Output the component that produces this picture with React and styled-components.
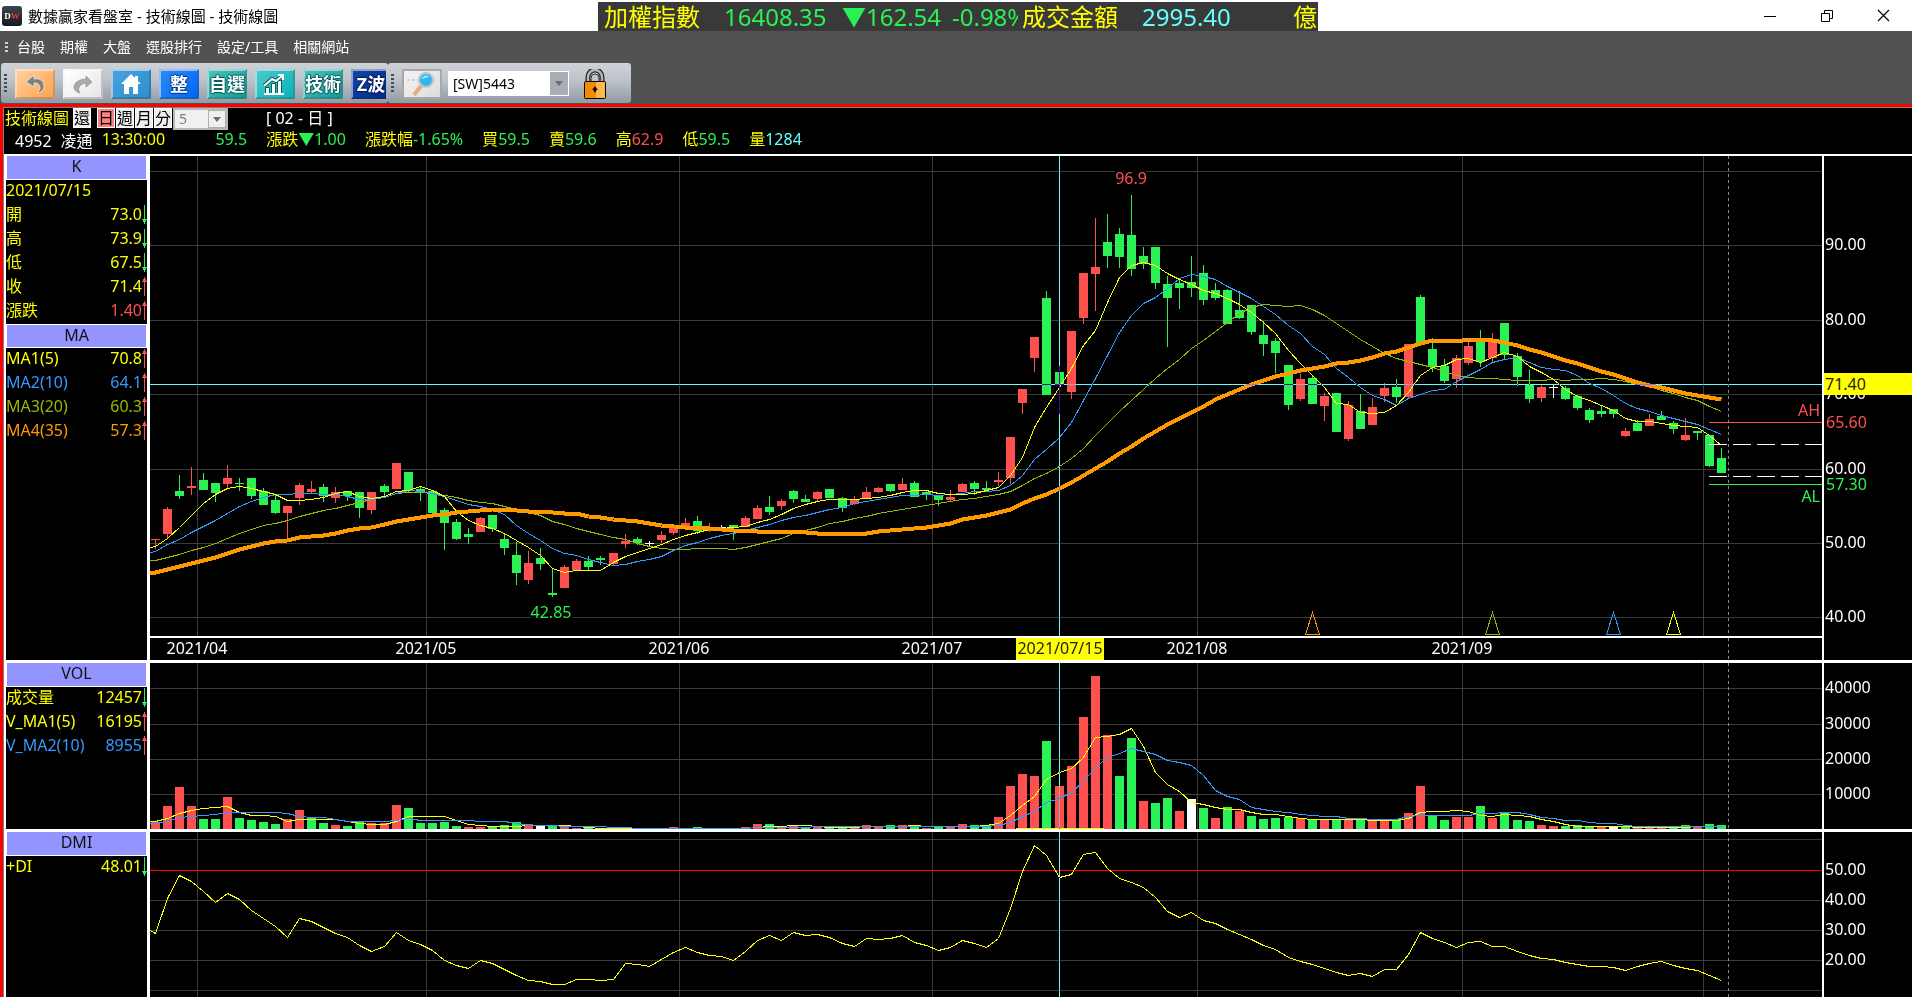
import React from "react";
import styled, { createGlobalStyle } from "styled-components";

const UP = "#ff5050";
const DOWN = "#2af254";
const YELLOW = "#ffff00";
const BLUE = "#3399ff";
const OLIVE = "#96b800";
const ORANGE = "#ff9900";
const CYAN = "#66ffff";
const GRID = "#3c3c3c";

const GlobalStyle = createGlobalStyle`
  * {
    box-sizing: border-box;
  }
  body {
    margin: 0;
    background: #000;
    font-family: "Noto Sans", "Noto Sans CJK TC", sans-serif;
    font-size: 16px;
  }
  button, select {
    font-family: inherit;
  }
`;

const Window = styled.div`
  display: flex;
  flex-direction: column;
  height: 100vh;
  min-height: 600px;
  overflow: hidden;
`;

const TitleBar = styled.header`
  display: grid;
  grid-template-columns: 598fr 720px 594fr;
  height: 31px;
  flex: none;
  background: #fff;
`;

const Title = styled.h1`
  display: flex;
  align-items: center;
  gap: 6px;
  margin: 0;
  padding-left: 2px;
  font-size: 15px;
  font-weight: 400;
  color: #000;
  white-space: nowrap;
`;

const AppIcon = styled.span`
  display: flex;
  align-items: center;
  justify-content: center;
  width: 20px;
  height: 20px;
  border-radius: 3px;
  background: linear-gradient(#3c4450, #14181e);
  color: #fff;
  font: bold 9px "Liberation Serif", serif;

  b {
    color: #e8421c;
  }
`;

const Ticker = styled.div`
  display: flex;
  align-items: center;
  margin-top: 2px;
  padding: 0 2px 0 6px;
  background: #393939;
  color: ${YELLOW};
  font-size: 24px;
  line-height: 28px;
  white-space: nowrap;
`;

const TickerValue = styled.span`
  flex: none;
  width: ${(p) => p.$w}px;
  color: ${(p) => p.$color};
  overflow: ${(p) => (p.$clip ? "hidden" : "visible")};
`;

const WindowButtons = styled.div`
  display: flex;
  justify-content: flex-end;
`;

const WindowButton = styled.button`
  display: flex;
  align-items: center;
  justify-content: center;
  width: 57px;
  padding: 0;
  border: 0;
  background: none;
`;

const MenuBar = styled.nav`
  display: flex;
  align-items: center;
  gap: 15px;
  height: 32px;
  flex: none;
  padding-left: 5px;
  background: #525252;

  a {
    color: #fff;
    font-size: 14px;
    line-height: 20px;
    text-decoration: none;
  }
`;

const Grip = styled.span`
  width: 3px;
  height: ${(p) => p.$h}px;
  background: repeating-linear-gradient(
    ${(p) => p.$color} 0 2px,
    transparent 2px 4px
  );
`;

const MenuGrip = styled(Grip)`
  margin-right: -6px;
`;

const ToolBars = styled.div`
  display: flex;
  height: 41px;
  flex: none;
  padding: 0 1px 1px;
  background: #525252;
`;

const ToolBar = styled.div`
  display: flex;
  align-items: center;
  width: ${(p) => p.$w}px;
  padding: 1px 2px 0 3px;
  border-radius: 3px;
  background: linear-gradient(#ced2d7, #c0c5cb 40%, #929aa4);
`;

const Tools = styled.div`
  display: flex;
  gap: 8px;
  margin-left: 8px;
  overflow: hidden;
`;

const ToolButton = styled.button`
  display: flex;
  align-items: center;
  justify-content: center;
  flex: none;
  width: 40px;
  height: 30px;
  padding: 0;
  border: 2px solid;
  border-color: rgba(255, 255, 255, 0.55) rgba(0, 0, 0, 0.22)
    rgba(0, 0, 0, 0.22) rgba(255, 255, 255, 0.55);
  background: linear-gradient(135deg, ${(p) => p.$from}, ${(p) => p.$to});
  color: #fff;
  font-size: 18px;
  font-weight: 700;
  line-height: 24px;
  white-space: nowrap;
  text-shadow: 1px 0 1px ${(p) => p.$ink}, -1px 0 1px ${(p) => p.$ink},
    0 1px 1px ${(p) => p.$ink}, 0 -1px 1px ${(p) => p.$ink};
`;

const SearchButton = styled(ToolButton)`
  margin-left: 8px;
  border-color: #a8a8a8;
`;

const SelectWrap = styled.label`
  display: flex;
  position: relative;
  width: ${(p) => p.$w}px;
  height: ${(p) => p.$h}px;

  select {
    width: 100%;
    padding: 0 4px;
    border: ${(p) => p.$border};
    border-radius: 0;
    background: ${(p) => p.$bg};
    color: ${(p) => p.$color};
    font-size: 14px;
    line-height: 18px;
    opacity: 1;
    appearance: none;
  }
`;

const SymbolWrap = styled(SelectWrap)`
  margin: 0 15px 0 6px;
`;

const DropMark = styled.span`
  display: flex;
  align-items: center;
  justify-content: center;
  position: absolute;
  top: ${(p) => p.$inset}px;
  right: ${(p) => p.$inset}px;
  bottom: ${(p) => p.$inset}px;
  width: 18px;
  background: ${(p) => p.$bg};
  border: ${(p) => p.$border || 0};
  pointer-events: none;

  &::after {
    content: "";
    border: 4px solid transparent;
    border-top: 5px solid #6a6e74;
    border-bottom: 0;
  }
`;

const LockButton = styled.button`
  display: flex;
  padding: 0;
  border: 0;
  background: none;
`;

const Frame = styled.main`
  display: flex;
  flex-direction: column;
  flex: 1;
  min-height: 0;
  border-top: 3px solid #f00;
  border-left: 3px solid #f00;
  background: #000;
`;

const Inner = styled.div`
  display: flex;
  flex-direction: column;
  flex: 1;
  min-height: 0;
  border-top: 1px solid #808080;
  border-left: 1px solid #808080;
`;

const ViewBar = styled.div`
  display: flex;
  align-items: flex-start;
  height: 22px;
  flex: none;
  color: #fff;
  line-height: 20px;
  white-space: nowrap;

  h2 {
    margin: 0 4px 0 1px;
    color: ${YELLOW};
    font-size: 16px;
    font-weight: 400;
    line-height: 20px;
  }
`;

const PeriodButton = styled.button`
  width: 18px;
  height: 20px;
  margin-right: ${(p) => p.$gap || 1}px;
  padding: 0;
  border: 1px solid #fff;
  background: ${(p) => (p.$on ? "#ff8080" : "#f0f0f0")};
  color: #000;
  font-size: 16px;
  line-height: 16px;
`;

const ViewName = styled.span`
  margin-left: 38px;
`;

const Quote = styled.div`
  display: flex;
  gap: 19px;
  height: 24px;
  flex: none;
  padding-left: 11px;
  color: ${YELLOW};
  line-height: 18px;
  white-space: nowrap;
`;

const Stock = styled.span`
  display: flex;
  gap: 9px;
  color: #fff;
  line-height: 22px;

  time {
    color: ${YELLOW};
    line-height: 18px;
  }
`;

const Last = styled.span`
  width: 63px;
  color: ${DOWN};
  text-align: right;
`;

const Tint = styled.span`
  color: ${(p) => p.$color};
`;

const Board = styled.div`
  display: flex;
  flex-direction: column;
  flex: 1;
  gap: 3px;
  min-height: 0;
  border-top: 2px solid #fff;
  border-left: 2px solid #fff;
  background: #fff;
`;

const Pane = styled.section`
  display: grid;
  grid-template-columns: 141px minmax(0, 1fr) 88px;
  flex: ${(p) => p.$share} 1 0;
  min-height: 0;
  background: #000;
`;

const Readout = styled.dl`
  margin: 0;
  overflow: hidden;
`;

const ReadoutTitle = styled.h3`
  height: 24px;
  margin: 0;
  border: 1px solid #fff;
  border-top-width: ${(p) => (p.$first ? 0 : 1)}px;
  background: #9494ff;
  color: #111;
  font-size: 16px;
  font-weight: 400;
  line-height: 20px;
  text-align: center;
`;

const ReadoutRow = styled.div`
  display: flex;
  justify-content: space-between;
  height: 24px;
  color: ${(p) => p.$color};
  line-height: 21px;
  white-space: nowrap;

  dd {
    display: flex;
    margin: 0;
    color: ${(p) => p.$valueColor || p.$color};
  }
`;

const Trend = styled.svg`
  width: 5px;
  height: 19px;
  margin: 1px 0 0;
`;

const ChartColumn = styled.div`
  display: flex;
  flex-direction: column;
  min-width: 0;
  min-height: 0;
  border-left: 3px solid #fff;
  border-right: 2px solid #fff;
`;

const Chart = styled.svg`
  display: block;
  flex: ${(p) => p.$share || 1} 1 0;
  width: 100%;
  min-height: 0;
`;

const DateAxis = styled(Chart)`
  flex: none;
  height: 24px;
  border-top: 2px solid #fff;
`;

const AxisPane = styled.svg`
  display: block;
  width: 100%;
  height: 100%;
  min-height: 0;
`;

// [colour, high, body top, body bottom, low]
const candles = [
  ["r", 539, 539, 540, 549], ["r", 507, 509, 534, 538], ["g", 475, 491, 496, 499],
  ["r", 467, 486, 488, 495], ["g", 473, 480, 490, 490], ["g", 483, 483, 493, 502],
  ["r", 465, 478, 484, 489], ["g", 478, 483, 484, 491], ["g", 478, 478, 496, 499],
  ["g", 488, 491, 505, 505], ["g", 495, 500, 513, 514], ["r", 506, 506, 513, 539],
  ["r", 483, 485, 498, 505], ["r", 481, 489, 492, 493], ["g", 484, 487, 496, 502],
  ["r", 487, 492, 498, 503], ["g", 491, 491, 496, 501], ["g", 492, 492, 508, 518],
  ["r", 492, 492, 510, 514], ["g", 484, 486, 492, 496], ["r", 463, 463, 489, 489],
  ["g", 472, 472, 490, 492], ["g", 487, 489, 492, 501], ["g", 491, 491, 513, 513],
  ["g", 508, 510, 523, 550], ["g", 519, 522, 539, 540], ["g", 528, 534, 537, 544],
  ["r", 517, 518, 532, 532], ["g", 515, 515, 529, 532], ["g", 534, 539, 548, 555],
  ["g", 542, 555, 573, 585], ["r", 551, 563, 580, 584], ["g", 548, 558, 564, 570],
  ["g", 568, 593, 595, 597], ["r", 565, 567, 588, 588], ["r", 559, 561, 570, 570],
  ["g", 556, 561, 567, 570], ["g", 556, 558, 560, 565], ["r", 553, 553, 564, 565],
  ["r", 534, 541, 544, 548], ["g", 537, 539, 543, 545], ["w", 541, 543, 544, 547],
  ["r", 531, 535, 540, 543], ["r", 526, 526, 533, 535], ["r", 518, 523, 526, 526],
  ["g", 516, 521, 531, 534], ["r", 523, 527, 531, 532], ["w", 525, 527, 528, 528],
  ["g", 525, 525, 528, 540], ["r", 516, 518, 527, 527], ["r", 505, 508, 519, 519],
  ["g", 496, 507, 512, 515], ["r", 499, 501, 506, 510], ["g", 490, 491, 499, 503],
  ["g", 495, 499, 502, 502], ["r", 491, 492, 499, 501], ["g", 489, 489, 498, 498],
  ["g", 497, 498, 508, 512], ["r", 496, 499, 504, 505], ["r", 487, 492, 498, 498],
  ["r", 487, 488, 492, 493], ["g", 484, 484, 491, 492], ["r", 478, 484, 490, 490],
  ["g", 481, 483, 497, 497], ["g", 491, 492, 494, 500], ["g", 496, 496, 500, 506],
  ["r", 490, 497, 500, 502], ["r", 483, 484, 492, 492], ["g", 481, 483, 489, 495],
  ["g", 481, 488, 490, 491], ["r", 472, 480, 482, 486], ["r", 437, 437, 478, 484],
  ["r", 389, 389, 403, 414], ["r", 337, 337, 358, 372], ["g", 291, 298, 395, 395],
  ["g", 366, 372, 385, 414], ["r", 331, 331, 392, 399], ["r", 273, 273, 318, 324],
  ["r", 218, 267, 274, 311], ["g", 214, 242, 256, 268], ["g", 228, 234, 257, 268],
  ["g", 195, 235, 269, 276], ["g", 247, 256, 264, 269], ["g", 247, 247, 283, 289],
  ["g", 276, 284, 298, 347], ["g", 278, 283, 288, 309], ["g", 256, 282, 288, 297],
  ["g", 265, 273, 300, 305], ["g", 283, 290, 298, 300], ["g", 289, 290, 324, 324],
  ["g", 291, 310, 318, 319], ["g", 305, 305, 332, 335], ["g", 321, 335, 344, 356],
  ["g", 338, 341, 353, 373], ["g", 365, 365, 405, 410], ["r", 374, 379, 399, 401],
  ["g", 376, 378, 404, 404], ["r", 393, 396, 406, 421], ["g", 393, 393, 432, 432],
  ["r", 401, 405, 439, 441], ["g", 394, 411, 429, 429], ["r", 398, 407, 425, 425],
  ["r", 383, 388, 396, 402], ["g", 379, 387, 397, 403], ["r", 344, 344, 397, 398],
  ["g", 295, 297, 344, 344], ["g", 338, 349, 367, 372], ["g", 359, 366, 381, 383],
  ["r", 355, 358, 379, 388], ["r", 341, 346, 363, 365], ["g", 330, 342, 362, 367],
  ["r", 333, 340, 358, 363], ["g", 323, 323, 355, 359], ["g", 353, 356, 377, 386],
  ["g", 370, 385, 399, 403], ["r", 385, 387, 398, 402], ["w", 385, 387, 388, 398],
  ["g", 386, 388, 399, 400], ["g", 395, 396, 408, 410], ["g", 408, 410, 420, 423],
  ["g", 406, 411, 414, 417], ["g", 409, 409, 414, 418], ["r", 428, 431, 436, 437],
  ["g", 420, 423, 431, 431], ["r", 414, 419, 426, 426], ["g", 411, 416, 420, 420],
  ["g", 421, 423, 429, 434], ["r", 418, 435, 440, 441], ["g", 431, 431, 433, 440],
  ["g", 435, 435, 466, 467], ["g", 448, 458, 473, 473],
];

const ma5 = [
  546, 538, 527, 515, 503, 494, 488, 486, 488, 491, 494, 500, 500, 499, 497, 493,
  491, 496, 498, 496, 491, 490, 486, 490, 496, 511, 520, 525, 528, 533, 540, 547,
  555, 568, 572, 570, 570, 570, 562, 556, 552, 548, 544, 539, 535, 532, 529, 528,
  527, 526, 522, 519, 514, 508, 504, 501, 499, 499, 499, 498, 497, 495, 492, 490,
  490, 493, 494, 494, 493, 490, 487, 475, 457, 427, 407, 387, 368, 345, 330, 302,
  277, 265, 262, 265, 273, 279, 284, 290, 293, 298, 304, 312, 322, 333, 350, 363,
  375, 387, 403, 404, 412, 413, 412, 405, 392, 375, 367, 365, 359, 358, 362, 357,
  352, 356, 366, 372, 379, 389, 396, 400, 405, 410, 418, 421, 421, 423, 425, 426,
  427, 435, 445,
];

const ma10 = [
  551, 544, 539, 532, 526, 520, 513, 506, 501, 497, 494, 494, 493, 493, 494, 494,
  496, 499, 499, 497, 493, 490, 491, 493, 496, 500, 504, 506, 509, 514, 525, 533,
  540, 548, 553, 555, 559, 562, 565, 564, 561, 559, 556, 550, 545, 542, 538, 535,
  533, 530, 527, 524, 520, 517, 515, 512, 509, 507, 503, 501, 499, 497, 495, 495,
  494, 495, 494, 493, 491, 491, 490, 485, 475, 459, 449, 437, 422, 400, 378, 355,
  332, 315, 303, 297, 288, 278, 274, 276, 279, 286, 292, 298, 306, 314, 325, 333,
  346, 354, 368, 377, 387, 395, 399, 405, 398, 394, 390, 389, 381, 375, 369, 362,
  359, 357, 362, 367, 369, 370, 375, 383, 388, 395, 403, 408, 411, 415, 418, 421,
  424, 429, 434,
];

const ma20 = [
  560, 557, 554, 550, 547, 543, 538, 533, 529, 525, 523, 520, 516, 513, 510, 508,
  505, 502, 499, 497, 493, 492, 492, 493, 495, 497, 500, 502, 503, 506, 509, 512,
  515, 521, 524, 528, 531, 534, 537, 539, 543, 546, 548, 549, 549, 548, 548, 548,
  549, 547, 544, 541, 538, 533, 530, 527, 523, 521, 518, 516, 513, 511, 509, 507,
  505, 503, 501, 499, 498, 496, 494, 491, 485, 478, 473, 466, 458, 448, 435, 423,
  411, 400, 389, 378, 368, 359, 348, 340, 331, 322, 313, 307, 304, 305, 306, 305,
  309, 315, 323, 331, 339, 346, 353, 358, 361, 364, 367, 371, 375, 377, 378, 378,
  379, 380, 380, 380, 379, 380, 379, 379, 378, 379, 381, 384, 386, 390, 393, 397,
  400, 406, 411,
];

const ma35 = [
  572, 569, 566, 563, 560, 557, 553, 549, 546, 543, 541, 540, 537, 536, 535, 533,
  530, 528, 527, 524, 521, 519, 517, 515, 514, 512, 511, 510, 509, 509, 510, 511,
  511, 512, 513, 513, 516, 517, 519, 520, 521, 523, 525, 526, 527, 527, 528, 529,
  530, 530, 531, 531, 531, 531, 532, 533, 533, 533, 533, 533, 531, 530, 529, 528,
  527, 525, 523, 519, 517, 515, 512, 509, 503, 498, 494, 488, 482, 475, 468, 461,
  453, 446, 438, 431, 424, 418, 412, 406, 399, 394, 389, 384, 380, 376, 373, 370,
  368, 366, 363, 362, 360, 357, 353, 351, 347, 343, 340, 340, 341, 339, 339, 340,
  342, 345, 349, 352, 356, 360, 363, 367, 371, 374, 378, 382, 385, 387, 390, 393,
  395, 397, 399,
];

const volumes = [
  7, 23, 42, 23, 10, 10, 32, 11, 9, 7, 5, 10, 19, 12, 6, 4,
  3, 7, 6, 6, 24, 21, 6, 6, 7, 3, 2, 2, 3, 4, 7, 5,
  3, 3, 2, 1, 2, 1, 1, 1, 1, 1, 1, 2, 1, 2, 1, 1,
  1, 2, 5, 5, 2, 3, 2, 2, 1, 2, 2, 4, 2, 4, 4, 3,
  1, 3, 2, 5, 4, 4, 12, 43, 55, 53, 88, 43, 63, 112, 153, 94,
  53, 91, 28, 26, 31, 18, 30, 21, 11, 22, 18, 13, 10, 11, 12, 11,
  10, 9, 9, 9, 9, 9, 9, 9, 16, 43, 14, 9, 12, 12, 23, 11,
  16, 9, 8, 4, 3, 3, 4, 3, 2, 3, 3, 2, 2, 2, 2, 4,
  3, 5, 4,
];

const volumeColors =
  "rrrrggrgggg" + "rrggrggrrrgggggrrgggrwgrrgrrrrrrrggrwgr" +
  "rgrrgrggrrrgrgrgrrggrrrr" + "grrrrrggrggrwgrgrgggg" +
  "rgrgrgrrgrrggrrgrgggrrgggrwgrrrggrgg";

const vma5 = [
  821, 818, 813, 810, 808, 807, 806, 812, 815, 815, 816, 821, 819, 819, 819, 819,
  821, 823, 824, 824, 821, 816, 816, 816, 816, 820, 824, 825, 826, 826, 826, 825,
  825, 825, 825, 826, 827, 828, 828, 828, 828, 828, 828, 828, 828, 828, 828, 828,
  828, 828, 827, 826, 826, 825, 825, 826, 827, 827, 827, 826, 826, 826, 826, 825,
  826, 826, 826, 826, 826, 825, 823, 815, 805, 796, 779, 772, 768, 757, 737, 736,
  734, 728, 746, 772, 784, 791, 802, 804, 807, 809, 809, 812, 814, 814, 816, 818,
  819, 819, 819, 819, 819, 820, 820, 820, 818, 812, 811, 811, 810, 811, 815, 816,
  814, 815, 816, 819, 821, 824, 826, 826, 826, 826, 826, 827, 827, 827, 827, 827,
  826, 826, 826,
];

const vma10 = [
  823, 821, 817, 816, 815, 814, 812, 812, 812, 812, 812, 813, 816, 817, 817, 819,
  821, 821, 821, 821, 820, 818, 820, 820, 820, 820, 820, 821, 821, 821, 823, 825,
  825, 825, 826, 826, 826, 826, 827, 827, 828, 828, 828, 828, 828, 828, 828, 828,
  828, 828, 827, 827, 827, 827, 827, 826, 826, 826, 826, 826, 826, 826, 826, 826,
  826, 826, 826, 826, 826, 826, 825, 822, 816, 811, 802, 798, 792, 781, 767, 757,
  753, 748, 751, 754, 760, 762, 765, 775, 790, 796, 799, 807, 809, 811, 812, 814,
  815, 816, 816, 818, 818, 819, 819, 819, 816, 815, 815, 815, 815, 815, 813, 813,
  812, 812, 814, 817, 818, 820, 820, 822, 823, 823, 825, 826, 826, 826, 826, 826,
  826, 826, 826,
];

const plusDi = [
  933, 898, 875, 881, 891, 902, 893, 899, 910, 918, 926, 937, 918, 921, 927, 933,
  937, 945, 951, 946, 932, 940, 944, 950, 960, 965, 968, 960, 963, 969, 975, 980,
  981, 984, 984, 979, 979, 980, 979, 963, 964, 966, 959, 952, 947, 952, 955, 956,
  960, 951, 940, 935, 940, 932, 935, 934, 937, 943, 946, 938, 939, 938, 935, 942,
  945, 950, 947, 940, 943, 947, 938, 908, 871, 845, 855, 877, 874, 854, 852, 868,
  878, 882, 887, 897, 911, 917, 912, 920, 923, 929, 934, 939, 945, 949, 957, 961,
  964, 968, 972, 975, 973, 976, 969, 969, 954, 932, 938, 942, 947, 942, 941, 946,
  946, 951, 955, 958, 959, 962, 964, 966, 966, 967, 970, 966, 963, 961, 965, 968,
  970, 975, 980,
];

const months = [
  { x: 197, label: "2021/04" },
  { x: 426, label: "2021/05" },
  { x: 679, label: "2021/06" },
  { x: 932, label: "2021/07" },
  { x: 1197, label: "2021/08" },
  { x: 1462, label: "2021/09" },
  { x: 1703 },
];

const LEFT = 150;
const WIDTH = 1672;
const CURSOR_X = 1059;
const fills = { r: UP, g: DOWN, w: "#fff" };

const barX = (i) => 155 + Math.floor(i * 12.0534);
const pctX = (x) => `${((x - LEFT) / WIDTH) * 100}%`;
const pctY = (y, top, height) => `${((y - top) / height) * 100}%`;

function Line({ data, color, width = 1, lead = 0 }) {
  const start = `${LEFT},${data[0] + lead}.5`;
  const points = data.map((y, i) => `${barX(i) + 0.5},${y + 0.5}`);
  return (
    <polyline
      points={[start, ...points].join(" ")}
      fill="none"
      stroke={color}
      strokeWidth={width}
    />
  );
}

function Plot({ top, height, rows, children }) {
  return (
    <svg
      width="100%"
      height="100%"
      viewBox={`${LEFT} ${top} ${WIDTH} ${height}`}
      preserveAspectRatio="none"
      shapeRendering="crispEdges"
    >
      {rows.map((y) => (
        <rect key={y} x={LEFT} y={y} width={WIDTH} height="1" fill={GRID} />
      ))}
      {months.map(({ x }) => (
        <rect key={x} x={x} y={top} width="1" height={height} fill={GRID} />
      ))}
      <path
        d={`M1728.5 ${top}V${top + height}`}
        stroke="#8c8c8c"
        strokeDasharray="3 3"
      />
      {children}
      <rect
        x={CURSOR_X}
        y={top}
        width="1"
        height={height}
        fill={CYAN}
        style={{ mixBlendMode: "difference" }}
      />
    </svg>
  );
}

function Triangle({ x, color }) {
  return (
    <path
      d={`M${x} 612.5L${x - 7} 634.5H${x + 7}Z`}
      fill="none"
      stroke={color}
    />
  );
}

function PriceChart() {
  return (
    <Chart role="img" aria-label="K線">
      <Plot top={156} height={480} rows={[171, 245, 320, 394, 469, 543, 617]}>
        <rect x="1115" y="171" width="31" height="16" />
        <rect x="531" y="605" width="41" height="16" />
        {candles.map(([c, high, top, bottom, low], i) => (
          <g key={i} fill={fills[c]}>
            <rect x={barX(i)} y={high} width="1" height={low - high} />
            <rect x={barX(i) - 4} y={top} width="9" height={bottom - top} />
          </g>
        ))}
        <Line data={ma20} color={OLIVE} />
        <Line data={ma10} color={BLUE} lead={1} />
        <Line data={ma5} color={YELLOW} lead={1} />
        <Line data={ma35} color={ORANGE} width={4} lead={1} />
        <path d="M1709 422.5H1822" stroke={UP} />
        <path
          d="M1709 444.5H1822M1709 476.5H1822"
          stroke="#fff"
          strokeDasharray="18 6"
        />
        <path d="M1709 484.5H1822" stroke={DOWN} />
        <Triangle x={1312.5} color={ORANGE} />
        <Triangle x={1492.5} color={OLIVE} />
        <Triangle x={1613.5} color={BLUE} />
        <Triangle x={1673.5} color={YELLOW} />
        <rect
          x={LEFT}
          y="384"
          width={WIDTH}
          height="1"
          fill={CYAN}
          style={{ mixBlendMode: "difference" }}
        />
      </Plot>
      <g fontSize="16">
        <text x={pctX(1131)} y={pctY(184, 156, 480)} fill={UP} textAnchor="middle">
          96.9
        </text>
        <text x={pctX(551)} y={pctY(618, 156, 480)} fill={DOWN} textAnchor="middle">
          42.85
        </text>
        <text x={pctX(1820)} y={pctY(416, 156, 480)} fill={UP} textAnchor="end">
          AH
        </text>
        <text x={pctX(1820)} y={pctY(502, 156, 480)} fill={DOWN} textAnchor="end">
          AL
        </text>
      </g>
    </Chart>
  );
}

function Dates() {
  return (
    <DateAxis role="img" aria-label="日期">
      <g fontSize="16" textAnchor="middle" fill="#fff">
        {months
          .filter((m) => m.label)
          .map((m) => (
            <text key={m.x} x={pctX(m.x)} y="16">
              {m.label}
            </text>
          ))}
        <svg x={pctX(1016)} width="88" height="22">
          <rect width="88" height="22" fill={YELLOW} />
          <text x="44" y="16" fill="#222">
            2021/07/15
          </text>
        </svg>
      </g>
      <line
        x1={pctX(1728.5)}
        x2={pctX(1728.5)}
        y1="0"
        y2="22"
        stroke="#8c8c8c"
        strokeDasharray="3 3"
      />
    </DateAxis>
  );
}

function VolumeChart() {
  return (
    <Chart role="img" aria-label="成交量">
      <Plot top={663} height={166} rows={[688, 724, 759, 794]}>
        {volumes.map((h, i) => (
          <rect
            key={i}
            x={barX(i) - 4}
            y={829 - h}
            width="9"
            height={h}
            fill={fills[volumeColors[i]]}
          />
        ))}
        <Line data={vma5} color={YELLOW} />
        <Line data={vma10} color={BLUE} />
        <rect x="1016" y="828" width="88" height="1" fill={YELLOW} />
      </Plot>
    </Chart>
  );
}

function DmiChart() {
  return (
    <Chart role="img" aria-label="DMI">
      <Plot top={832} height={165} rows={[839, 900, 930, 960, 990]}>
        <rect x={LEFT} y="870" width={WIDTH} height="1" fill="#f00" />
        <Line data={plusDi} color={YELLOW} lead={-3} />
      </Plot>
    </Chart>
  );
}

function Axis({ top, height, ticks, children }) {
  return (
    <AxisPane fontSize="16" fill="#fff">
      {ticks.map(([y, label]) => (
        <text key={label} x="1" y={pctY(y + 5, top, height)}>
          {label}
        </text>
      ))}
      {children}
    </AxisPane>
  );
}

function Arrow({ up }) {
  return (
    <Trend viewBox="0 0 5 19" shapeRendering="crispEdges" aria-hidden="true">
      <path
        d={
          up
            ? "M2 0h1v19h-1zM1 2h3v2h-3zM0 4h5v1h-5z"
            : "M2 0h1v19h-1zM1 15h3v2h-3zM0 14h5v1h-5z"
        }
        fill={up ? UP : DOWN}
      />
    </Trend>
  );
}

function Item({ label, value, up, color = YELLOW, valueColor }) {
  return (
    <ReadoutRow $color={color} $valueColor={valueColor}>
      <dt>{label}</dt>
      {value && (
        <dd>
          {value}
          <Arrow up={up} />
        </dd>
      )}
    </ReadoutRow>
  );
}

function TopBar() {
  return (
    <TitleBar>
      <Title>
        <AppIcon>
          D<b>W</b>
        </AppIcon>
        數據贏家看盤室 - 技術線圖 - 技術線圖
      </Title>
      <Ticker>
        <TickerValue $w={120} $color={YELLOW}>加權指數</TickerValue>
        <TickerValue $w={118} $color={DOWN}>16408.35</TickerValue>
        <TickerValue $w={110} $color={DOWN}>▼162.54</TickerValue>
        <TickerValue $w={66} $color={DOWN} $clip>-0.98%</TickerValue>
        <TickerValue $w={124} $color={YELLOW}>&thinsp;成交金額</TickerValue>
        <TickerValue $w={151} $color={CYAN}>2995.40</TickerValue>
        <span>億</span>
      </Ticker>
      <WindowButtons>
        <WindowButton aria-label="最小化">
          <svg width="12" height="12" stroke="#000">
            <path d="M0 6.5h12" />
          </svg>
        </WindowButton>
        <WindowButton aria-label="還原">
          <svg width="12" height="12" fill="none" stroke="#000">
            <path d="M.5 3.5h8v8h-8zM3.5 3.5v-3h8v8h-3" />
          </svg>
        </WindowButton>
        <WindowButton aria-label="關閉">
          <svg width="13" height="13" stroke="#000" strokeWidth="1.2">
            <path d="M1 1l11 11M12 1L1 12" />
          </svg>
        </WindowButton>
      </WindowButtons>
    </TitleBar>
  );
}

function Toolbars() {
  return (
    <ToolBars>
      <ToolBar $w={387}>
        <Grip $h={20} $color="#444a52" />
        <Tools>
          <ToolButton $from="#ffd0a0" $to="#ffa24e" aria-label="上一頁">
            <svg width="24" height="22" viewBox="0 0 24 22">
              <path d="M3 9L11 2V6C18 5 21 9 21 13C21 17 18 20 14 20C17 17 18 15 16 12C15 10 13 10 11 10V14Z" fill="#808080" stroke="#fff" strokeWidth=".6" />
            </svg>
          </ToolButton>
          <ToolButton $from="#ffffff" $to="#e6e6e6" aria-label="下一頁">
            <svg width="24" height="22" viewBox="0 0 24 22">
              <path d="M21 9L15 3V6C8 6 3 10 3 14C3 17 5 19 9 20C6 16 8 11 15 10V14Z" fill="#aaa" stroke="#888" strokeWidth=".6" />
            </svg>
          </ToolButton>
          <ToolButton $from="#48a2dc" $to="#2f8fd0" aria-label="首頁">
            <svg width="22" height="22" viewBox="0 0 22 22">
              <path d="M11 1L1 11H4V21H9V14H13V21H18V11H21L18 8V3H15V5Z" fill="#fff" />
            </svg>
          </ToolButton>
          <ToolButton $from="#2b8cf4" $to="#0066ff" $ink="#003a8c">整</ToolButton>
          <ToolButton $from="#4cc0be" $to="#109c98" $ink="#085c5c">自選</ToolButton>
          <ToolButton $from="#4cc8c8" $to="#08b4bc" aria-label="走勢圖">
            <svg width="24" height="22" viewBox="0 0 24 22">
              <g fill="#fff" stroke="#085c5c">
                <path d="M2.5 14.5h4v6h-4zM8.5 10.5h4v10h-4zM14.5 7.5h4v13h-4z" />
              </g>
              <path d="M1 13L9 6L13 8L19 3" fill="none" stroke="#085c5c" strokeWidth="4" />
              <path d="M1 13L9 6L13 8L19 3M15 2h5v5M1 21h20" fill="none" stroke="#fff" strokeWidth="2" />
            </svg>
          </ToolButton>
          <ToolButton $from="#4cc0be" $to="#109c98" $ink="#085c5c">技術</ToolButton>
          <ToolButton $from="#1048a8" $to="#002884" $ink="#001a5c">Z波</ToolButton>
        </Tools>
      </ToolBar>
      <ToolBar $w={243}>
        <Grip $h={20} $color="#444a52" />
        <SearchButton $from="#f4f4f4" $to="#dcdcdc" aria-label="查詢">
          <svg width="34" height="26" viewBox="0 0 34 26">
            <path d="M2 9h30" stroke="#b4b4b4" strokeDasharray="3 2" />
            <path d="M16 15L9 24" stroke="#e8ab78" strokeWidth="4" />
            <circle cx="21" cy="9" r="7" fill="#35b5ee" stroke="#b8c8d0" strokeWidth="2" />
            <path d="M17 8a4 4 0 0 1 7-2z" fill="#a8e4ff" />
          </svg>
        </SearchButton>
        <SymbolWrap $w={121} $h={25} $bg="#fff" $color="#000" $border="1px solid #fff">
          <select aria-label="股票代號">
            <option>[SW]5443</option>
          </select>
          <DropMark $inset={1} $bg="#a8adb6" />
        </SymbolWrap>
        <LockButton aria-label="鎖定">
          <svg width="22" height="30" viewBox="0 0 22 30">
            <path d="M4 13V8a7 7 0 0 1 14 0v5" fill="none" stroke="#222" strokeWidth="5" />
            <path d="M4 13V8a7 7 0 0 1 14 0v5" fill="none" stroke="#b4b8bc" strokeWidth="2.5" />
            <path d="M7 13V9a4 4 0 0 1 8 0v4" fill="none" stroke="#333" />
            <rect x=".5" y="12.5" width="21" height="17" rx="1" fill="#f08c00" stroke="#000" />
            <path d="M12 13h9v16h-9z" fill="#ffb84c" />
            <path d="M11 17l1.5 2.5l1.5 .5l-1.5 1l-1.5 3l-1.5-3l-1.5-1l1.5-.5z" fill="#000" />
          </svg>
        </LockButton>
      </ToolBar>
    </ToolBars>
  );
}

export default function App() {
  return (
    <Window>
      <GlobalStyle />
      <TopBar />
      <MenuBar>
        <MenuGrip $h={10} $color="#d0d0d0" />
        {["台股", "期權", "大盤", "選股排行", "設定/工具", "相關網站"].map((m) => (
          <a key={m} href="#menu">
            {m}
          </a>
        ))}
      </MenuBar>
      <Toolbars />
      <Frame>
        <Inner>
          <ViewBar>
            <h2>技術線圖</h2>
            <PeriodButton $gap={6}>還</PeriodButton>
            <PeriodButton $on>日</PeriodButton>
            <PeriodButton>週</PeriodButton>
            <PeriodButton>月</PeriodButton>
            <PeriodButton>分</PeriodButton>
            <SelectWrap $w={55} $h={22} $bg="#f0f0f0" $color="#808080" $border="2px solid #b8b8b8">
              <select aria-label="分鐘" disabled>
                <option>5</option>
              </select>
              <DropMark $inset={2} $bg="#f0f0f0" $border="1px solid #b0b0b0" />
            </SelectWrap>
            <ViewName>[ 02 - 日 ]</ViewName>
          </ViewBar>
          <Quote>
            <Stock>
              <span>4952</span>
              <span>凌通</span>
              <time>13:30:00</time>
            </Stock>
            <Last>59.5</Last>
            <span>漲跌<Tint $color={DOWN}>▼1.00</Tint></span>
            <span>漲跌幅<Tint $color={DOWN}>-1.65%</Tint></span>
            <span>買<Tint $color={DOWN}>59.5</Tint></span>
            <span>賣<Tint $color={DOWN}>59.6</Tint></span>
            <span>高<Tint $color={UP}>62.9</Tint></span>
            <span>低<Tint $color={DOWN}>59.5</Tint></span>
            <span>量<Tint $color={CYAN}>1284</Tint></span>
          </Quote>
          <Board>
            <Pane $share={504}>
              <Readout>
                <ReadoutTitle $first>K</ReadoutTitle>
                <Item label="2021/07/15" />
                <Item label="開" value="73.0" />
                <Item label="高" value="73.9" />
                <Item label="低" value="67.5" />
                <Item label="收" value="71.4" up />
                <Item label="漲跌" value="1.40" up valueColor={UP} />
                <ReadoutTitle>MA</ReadoutTitle>
                <Item label="MA1(5)" value="70.8" up />
                <Item label="MA2(10)" value="64.1" up color={BLUE} />
                <Item label="MA3(20)" value="60.3" up color={OLIVE} />
                <Item label="MA4(35)" value="57.3" up color={ORANGE} />
              </Readout>
              <ChartColumn>
                <PriceChart />
                <Dates />
              </ChartColumn>
              <Axis
                top={156}
                height={504}
                ticks={[
                  [245, "90.00"],
                  [320, "80.00"],
                  [394, "70.00"],
                  [469, "60.00"],
                  [543, "50.00"],
                  [617, "40.00"],
                ]}
              >
                <svg y={pctY(373, 156, 504)} width="100%" height="22">
                  <rect width="100%" height="22" fill={YELLOW} />
                  <text x="1" y="17" fill="#222">
                    71.40
                  </text>
                </svg>
                <text x="2" y={pctY(428, 156, 504)} fill={UP}>
                  65.60
                </text>
                <text x="2" y={pctY(490, 156, 504)} fill={DOWN}>
                  57.30
                </text>
              </Axis>
            </Pane>
            <Pane $share={166}>
              <Readout>
                <ReadoutTitle $first>VOL</ReadoutTitle>
                <Item label="成交量" value="12457" />
                <Item label="V_MA1(5)" value="16195" up />
                <Item label="V_MA2(10)" value="8955" up color={BLUE} />
              </Readout>
              <ChartColumn>
                <VolumeChart />
              </ChartColumn>
              <Axis
                top={663}
                height={166}
                ticks={[
                  [688, "40000"],
                  [724, "30000"],
                  [759, "20000"],
                  [794, "10000"],
                ]}
              />
            </Pane>
            <Pane $share={165}>
              <Readout>
                <ReadoutTitle $first>DMI</ReadoutTitle>
                <Item label="+DI" value="48.01" />
              </Readout>
              <ChartColumn>
                <DmiChart />
              </ChartColumn>
              <Axis
                top={832}
                height={165}
                ticks={[
                  [870, "50.00"],
                  [900, "40.00"],
                  [930, "30.00"],
                  [960, "20.00"],
                ]}
              />
            </Pane>
          </Board>
        </Inner>
      </Frame>
    </Window>
  );
}
